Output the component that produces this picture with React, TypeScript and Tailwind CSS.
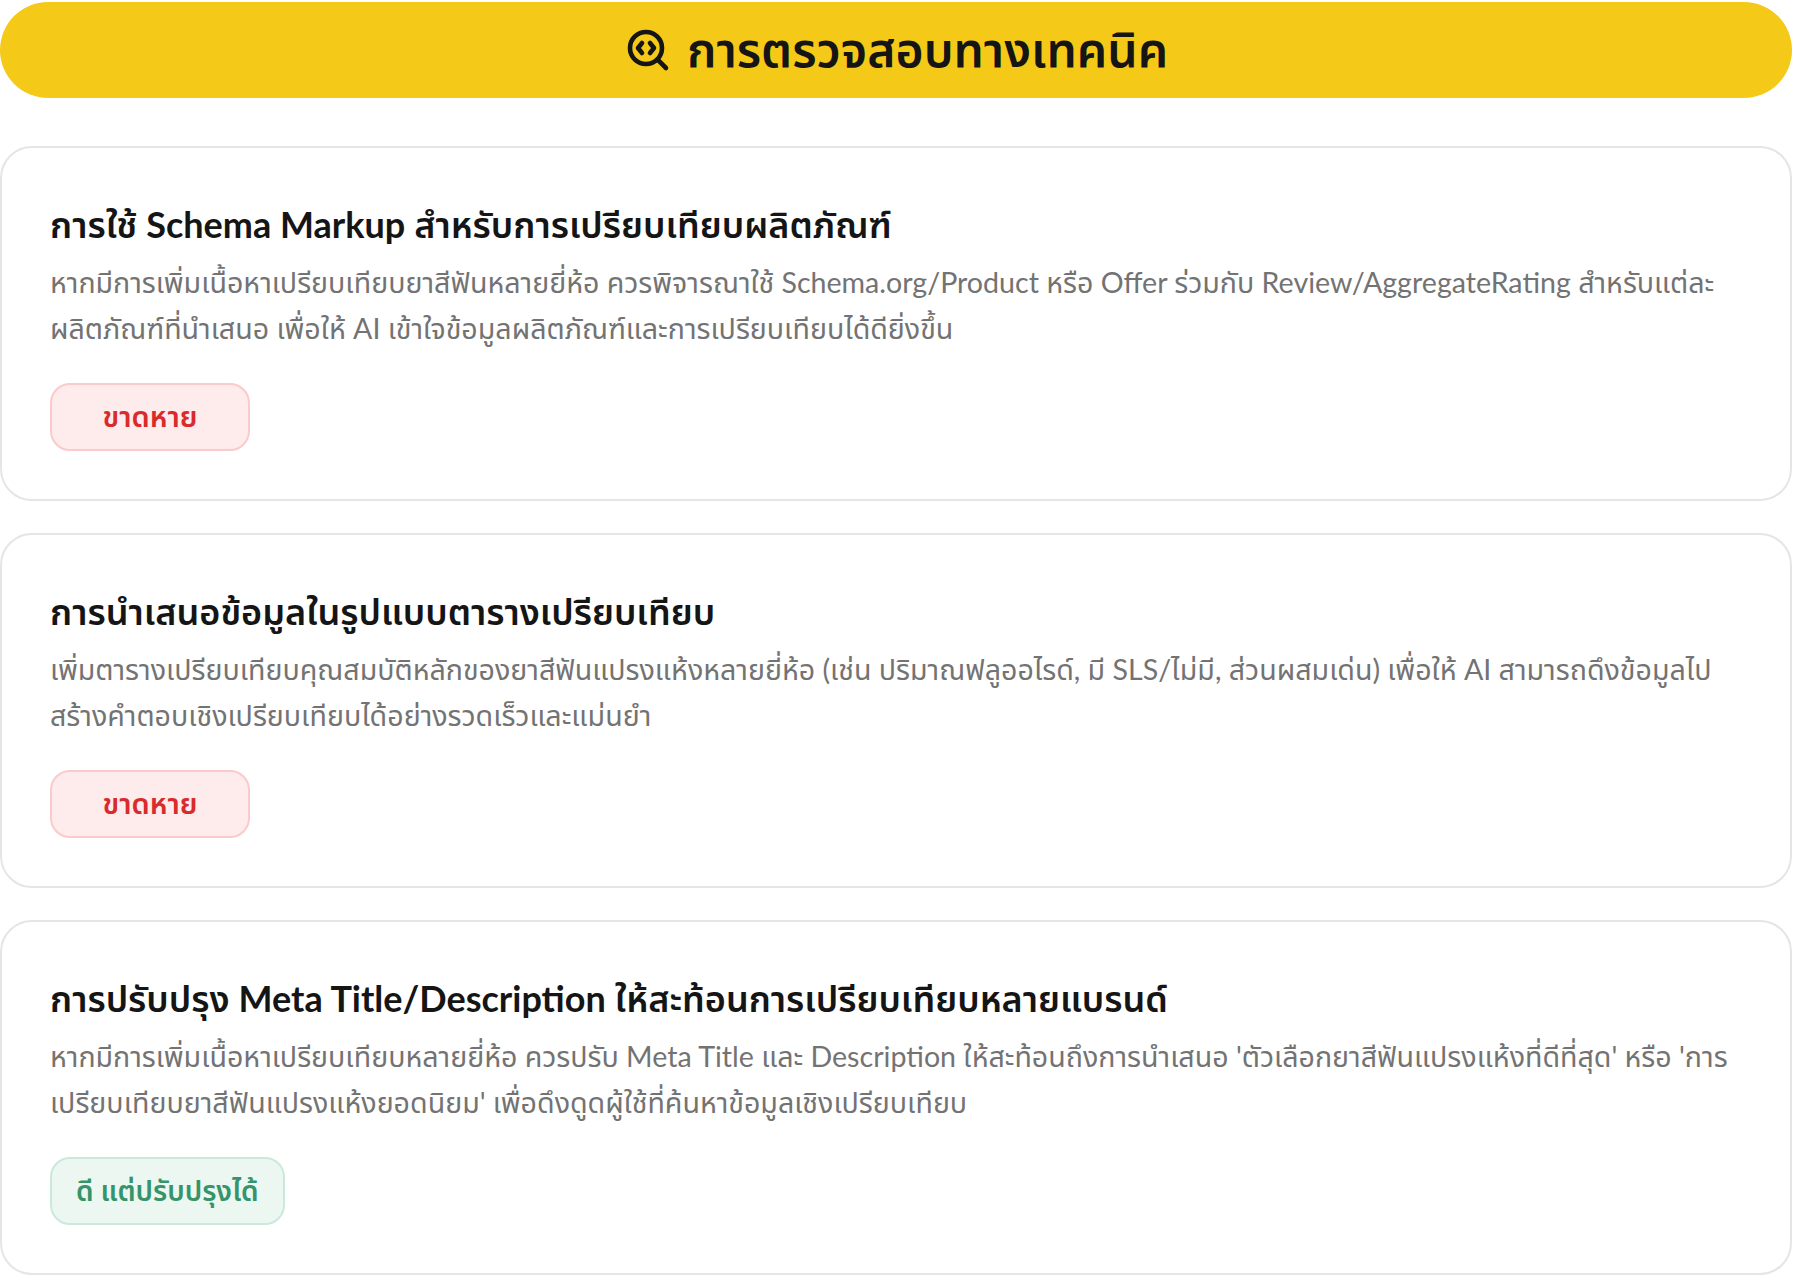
import { SearchCode } from "lucide-react";

const items = [
  {
    title: (
      <>
        การใช้ <span className="font-bold">Schema Markup</span> สำหรับการเปรียบเทียบผลิตภัณฑ์
      </>
    ),
    key: "a",
    body: "หากมีการเพิ่มเนื้อหาเปรียบเทียบยาสีฟันหลายยี่ห้อ ควรพิจารณาใช้ Schema.org/Product หรือ Offer ร่วมกับ Review/AggregateRating สำหรับแต่ละผลิตภัณฑ์ที่นำเสนอ เพื่อให้ AI เข้าใจข้อมูลผลิตภัณฑ์และการเปรียบเทียบได้ดียิ่งขึ้น",
    badge: "ขาดหาย",
    good: false,
  },
  {
    title: <>การนำเสนอข้อมูลในรูปแบบตารางเปรียบเทียบ</>,
    key: "b",
    body: "เพิ่มตารางเปรียบเทียบคุณสมบัติหลักของยาสีฟันแปรงแห้งหลายยี่ห้อ (เช่น ปริมาณฟลูออไรด์, มี SLS/ไม่มี, ส่วนผสมเด่น) เพื่อให้ AI สามารถดึงข้อมูลไปสร้างคำตอบเชิงเปรียบเทียบได้อย่างรวดเร็วและแม่นยำ",
    badge: "ขาดหาย",
    good: false,
  },
  {
    title: (
      <>
        การปรับปรุง <span className="font-bold">Meta Title/Description</span> ให้สะท้อนการเปรียบเทียบหลายแบรนด์
      </>
    ),
    key: "c",
    body: "หากมีการเพิ่มเนื้อหาเปรียบเทียบหลายยี่ห้อ ควรปรับ Meta Title และ Description ให้สะท้อนถึงการนำเสนอ 'ตัวเลือกยาสีฟันแปรงแห้งที่ดีที่สุด' หรือ 'การเปรียบเทียบยาสีฟันแปรงแห้งยอดนิยม' เพื่อดึงดูดผู้ใช้ที่ค้นหาข้อมูลเชิงเปรียบเทียบ",
    badge: "ดี แต่ปรับปรุงได้",
    good: true,
  },
];

export default function App() {
  return (
    <div className="font-['Lato','Noto_Sans_Thai','Noto_Sans',sans-serif] bg-white min-h-[1281px] pt-[2px] pr-[6px]">
      <div className="h-[96px] rounded-[48px] bg-[#f5c917] flex items-center justify-center gap-[15px] text-[#151515]">
        <SearchCode size={48} strokeWidth={2.3} />
        <h1 className="text-[48px] font-semibold leading-none pb-[2px]">การตรวจสอบทางเทคนิค</h1>
      </div>
      <div className="mt-[48px] flex flex-col gap-[32px]">
        {items.map((it) => (
          <div key={it.key} className="border-2 border-[#e5e5e5] rounded-[32px] bg-white p-[48px]">
            <h2 className="text-[36px] font-semibold leading-[56px] text-[#151515]">{it.title}</h2>
            <p className="mt-[7px] text-[28.6px] leading-[46px] text-[#737373]">{it.body}</p>
            <div className="mt-[32px] flex">
              <span
                className={`flex items-center justify-center min-w-[200px] h-[68px] px-[24px] pb-[2px] rounded-[20px] border-2 font-semibold ${
                  it.good
                    ? "text-[28px] bg-[#edf7f2] border-[#c9eadb] text-[#35946a]"
                    : "text-[29px] bg-[#feecec] border-[#fbcaca] text-[#d92b2b]"
                }`}
              >
                {it.badge}
              </span>
            </div>
          </div>
        ))}
      </div>
    </div>
  );
}
